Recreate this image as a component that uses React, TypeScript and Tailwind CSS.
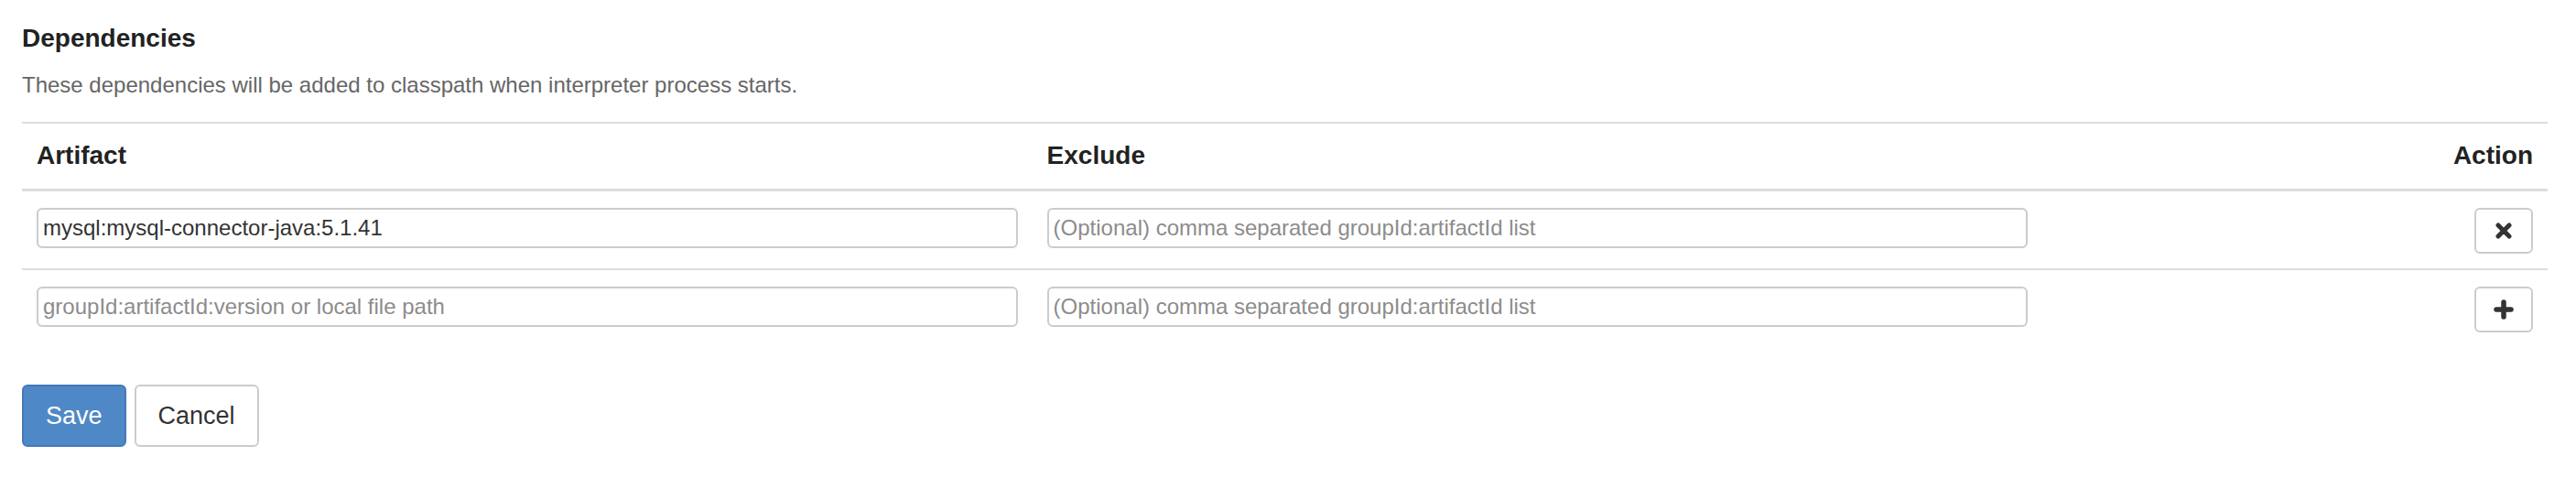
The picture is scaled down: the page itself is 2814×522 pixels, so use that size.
import { useState } from 'react';

type Dep = { artifact: string; exclude: string };

function RemoveIcon() {
  return (
    <svg width="20" height="20" viewBox="0 0 20 20" className="text-[#333]">
      <path d="M4 4 L16 16 M16 4 L4 16" stroke="currentColor" strokeWidth="5" strokeLinecap="round" fill="none" />
    </svg>
  );
}

function PlusIcon() {
  return (
    <svg width="22" height="22" viewBox="0 0 22 22" className="text-[#333]">
      <path d="M3 11 H19 M11 3 V19" stroke="currentColor" strokeWidth="5.5" strokeLinecap="round" fill="none" />
    </svg>
  );
}

function App() {
  const [deps] = useState<Dep[]>([{ artifact: 'mysql:mysql-connector-java:5.1.41', exclude: '' }]);

  const inputCls =
    'w-full h-[44px] border-2 border-[#ccc] rounded-[6px] px-[5px] text-[24px] text-[#333] bg-white outline-none placeholder:text-[#8c8c8c]';
  const actionCls =
    'w-[64px] h-[50px] border-2 border-[#ccc] rounded-[6px] bg-white flex items-center justify-center';

  return (
    <div className="min-h-screen bg-white pl-[24px] pr-[31px] pt-[26px] font-['Liberation_Sans',Arial,sans-serif]">
      <h4 className="text-[28px] leading-[32px] font-bold text-[#222]">Dependencies</h4>
      <p className="mt-[18px] text-[24px] leading-[34px] text-[#666]">
        These dependencies will be added to classpath when interpreter process starts.
      </p>

      <div className="mt-[23px] border-t-2 border-[#ddd]">
        <div className="grid grid-cols-[40%_40%_20%] border-b-[3px] border-[#ddd] text-[28px] leading-[38px] font-bold text-[#222]">
          <div className="px-4 pt-4 pb-[17px]">Artifact</div>
          <div className="px-4 pt-4 pb-[17px]">Exclude</div>
          <div className="px-4 pt-4 pb-[17px] text-right">Action</div>
        </div>

        {deps.map((d, i) => (
          <div key={i} className="grid grid-cols-[40%_40%_20%] border-b-2 border-[#ddd]">
            <div className="px-4 pt-[18px] pb-4">
              <input className={inputCls} defaultValue={d.artifact} />
            </div>
            <div className="px-4 pt-[18px] pb-4">
              <input className={inputCls} placeholder="(Optional) comma separated groupId:artifactId list" />
            </div>
            <div className="px-4 pt-[18px] pb-4 flex justify-end items-start">
              <button className={actionCls}>
                <RemoveIcon />
              </button>
            </div>
          </div>
        ))}

        <div className="grid grid-cols-[40%_40%_20%]">
          <div className="px-4 pt-[18px] pb-4">
            <input className={inputCls} placeholder="groupId:artifactId:version or local file path" />
          </div>
          <div className="px-4 pt-[18px] pb-4">
            <input className={inputCls} placeholder="(Optional) comma separated groupId:artifactId list" />
          </div>
          <div className="px-4 pt-[18px] pb-4 flex justify-end items-start">
            <button className={actionCls}>
              <PlusIcon />
            </button>
          </div>
        </div>
      </div>

      <div className="mt-[41px] flex gap-[9px]">
        <button className="h-[68px] px-[24px] border-2 border-[#4479b8] bg-[#4f88c6] text-white text-[27px] rounded-[6px]">
          Save
        </button>
        <button className="h-[68px] px-[24px] border-2 border-[#ccc] bg-white text-[#333] text-[27px] rounded-[6px]">
          Cancel
        </button>
      </div>
    </div>
  );
}

export default App;
